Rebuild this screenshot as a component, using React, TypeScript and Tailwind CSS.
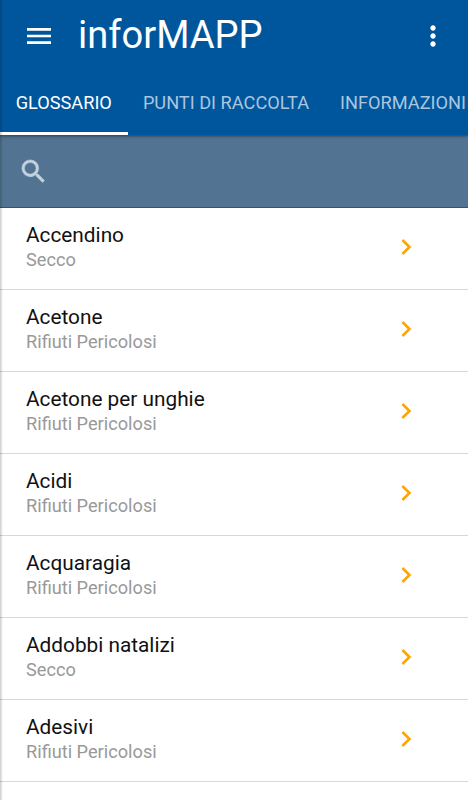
import { MdChevronRight, MdMenu, MdMoreVert, MdSearch } from "react-icons/md";

export default function App() {
  const tabs = [
    { name: "Glossario", style: "w-[127.5px] text-white border-white" },
    { name: "Punti di raccolta", style: "w-[197px] text-[#a9c6de] border-transparent" },
    { name: "Informazioni", style: "w-[157px] text-[#a9c6de] border-transparent" },
  ];

  // Voci del glossario con il tipo di rifiuto
  const items = [
    { id: 1, name: "Accendino", type: "Secco" },
    { id: 2, name: "Acetone", type: "Rifiuti Pericolosi" },
    { id: 3, name: "Acetone per unghie", type: "Rifiuti Pericolosi" },
    { id: 4, name: "Acidi", type: "Rifiuti Pericolosi" },
    { id: 5, name: "Acquaragia", type: "Rifiuti Pericolosi" },
    { id: 6, name: "Addobbi natalizi", type: "Secco" },
    { id: 7, name: "Adesivi", type: "Rifiuti Pericolosi" },
    { id: 8, name: "Alberi di natale finti", type: "Secco" },
  ];

  return (
    <div className="relative h-[800px] w-[468px] overflow-hidden bg-white font-[Roboto,sans-serif]">
      {/* Intestazione */}
      <header className="relative z-10 bg-[#00569d] shadow-[0_1px_3px_rgba(0,0,0,0.5)]">
        <div className="flex h-[73px] items-center pb-px pl-[23px] pr-[19px]">
          <MdMenu className="size-8 text-white" />
          <h1 className="ml-[23px] flex-1 pb-[3px] text-[38.1px] leading-[66px] text-white">inforMAPP</h1>
          <MdMoreVert className="size-8 text-white" />
        </div>
        <nav className="flex h-[62px] overflow-hidden whitespace-nowrap">
          {tabs.map((tab) => (
            <button
              key={tab.name}
              className={`flex shrink-0 items-center justify-center border-b-[3px] pt-px text-[18.2px] uppercase ${tab.style}`}
            >
              {tab.name}
            </button>
          ))}
        </nav>
      </header>

      {/* Barra di ricerca */}
      <div className="flex h-[73px] items-center border-b border-[#1f5a85] bg-[#527492] pl-[18px]">
        <MdSearch className="size-[31px] text-[#c3d2de] [&_path:last-child]:stroke-[0.4]" />
      </div>

      {/* Lista delle voci */}
      <ul>
        {items.map((item) => (
          <li
            key={item.id}
            className="flex h-[82px] items-center justify-between border-b border-[#d8d8d8] pb-[3px] pl-[26px] pr-[46px]"
          >
            <div className="pb-0.5">
              <p className="text-[20.8px] leading-[26px] text-[#111111]">{item.name}</p>
              <p className="text-[18.2px] leading-[23px] text-[#999999]">{item.type}</p>
            </div>
            <MdChevronRight className="size-8 text-[#ffa500]" />
          </li>
        ))}
      </ul>

      {/* Ombra del bordo sinistro */}
      <div className="absolute inset-y-0 left-0 z-20 w-[3px] bg-linear-to-r from-black/20 to-transparent" />
    </div>
  );
}
